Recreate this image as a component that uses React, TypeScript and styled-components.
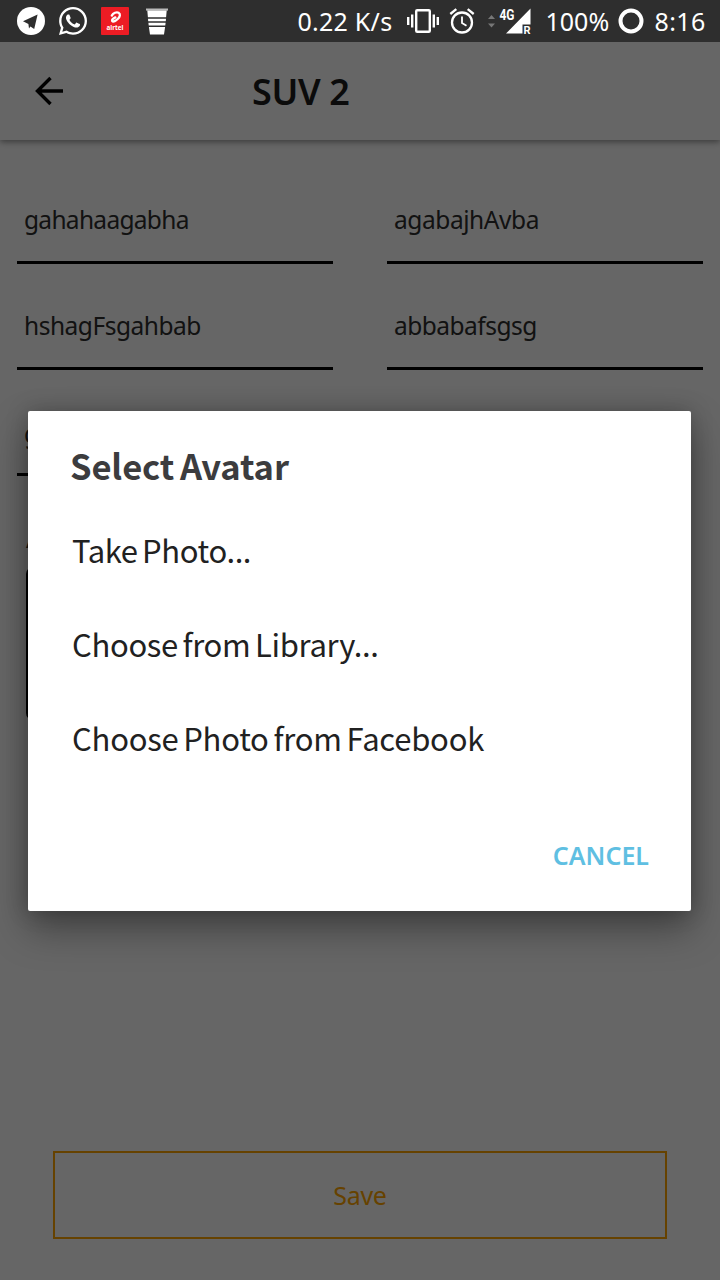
import React from "react";
import styled, { createGlobalStyle } from "styled-components";
import { FaWhatsapp } from "react-icons/fa";

const GlobalStyle = createGlobalStyle`
  * { box-sizing: border-box; }
  body {
    margin: 0;
    background: #fff;
    font-family: "Noto Sans", "Open Sans", sans-serif;
  }
`;

const Screen = styled.div`
  position: relative;
  display: flex;
  flex-direction: column;
  width: 720px;
  height: 1280px;
  overflow: hidden;
  background: #fff;
`;

const Text = styled.span<{ $width?: number; $spacing?: number }>`
  display: block;
  white-space: nowrap;
  width: ${(p) => (p.$width ? `${p.$width}px` : "auto")};
  letter-spacing: ${(p) => p.$spacing ?? 0}px;
`;

const StatusBar = styled.header`
  position: relative;
  z-index: 3;
  display: flex;
  flex: none;
  justify-content: space-between;
  height: 42px;
  padding: 0 13.5px 0 17px;
  background: #2e2e2e;
  color: #fff;
  font-size: 25px;
  line-height: 42px;
  svg { display: block; flex: none; }
`;

const StatusGroup = styled.div<{ $gap?: number }>`
  display: flex;
  align-items: center;
  gap: ${(p) => p.$gap ?? 0}px;
`;

const Slot = styled.div<{ $left: number }>`
  margin-left: ${(p) => p.$left}px;
`;

const AppBar = styled.div`
  display: flex;
  flex: none;
  align-items: center;
  height: 98px;
  padding-left: 34px;
  background: #fff;
  box-shadow: 0 2px 6px rgba(0, 0, 0, 0.42);
  svg { display: block; }
`;

const PageTitle = styled.h1`
  margin: 2px 0 0 188px;
  color: #1c1c1c;
  font-size: 36px;
  font-weight: 600;
  line-height: 96px;
  letter-spacing: -0.4px;
`;

const Form = styled.main`
  display: flex;
  flex: 1;
  flex-direction: column;
  padding: 18px 17px 41px;
`;

const Fields = styled.div`
  display: grid;
  grid-template-columns: 316px 316px;
  column-gap: 54px;
`;

const Field = styled.div`
  height: 106px;
  padding: 41px 7px 0;
  border-bottom: 3px solid #000;
  color: #2e2e2e;
  font-size: 24.5px;
  line-height: 41px;
  &:last-child { padding-top: 43px; }
`;

const AvatarLabel = styled.div`
  padding: 42px 0 0 9px;
  color: #333;
  font-size: 25px;
  line-height: 40px;
`;

const AvatarBox = styled.div`
  width: 156px;
  height: 153px;
  margin: 9px 0 0 9px;
  border: 3px solid #000;
  border-radius: 7px;
`;

const SaveButton = styled.button`
  height: 88px;
  margin: auto 36px 0;
  border: 2px solid #ffa500;
  background: transparent;
  color: #ffa500;
  font: 25px/84px "Noto Sans", sans-serif;
  letter-spacing: -0.3px;
  padding: 0;
`;

const Scrim = styled.div`
  position: absolute;
  inset: 42px 0 0;
  z-index: 2;
  display: flex;
  align-items: center;
  justify-content: flex-start;
  padding-left: 28px;
  background: rgba(0, 0, 0, 0.6);
`;

const Dialog = styled.section`
  display: flex;
  flex-direction: column;
  width: 663px;
  height: 500px;
  padding: 30px 42px 0;
  border-radius: 2px;
  background: #fff;
  font-family: "Noto Sans CJK SC", "Noto Sans", sans-serif;
  box-shadow: 0 18px 38px rgba(0, 0, 0, 0.36), 0 0 22px rgba(0, 0, 0, 0.22);
`;

const DialogTitle = styled.h2`
  margin: 0 0 14px;
  color: #3c3c3e;
  font-size: 34.5px;
  font-weight: 700;
  line-height: 48px;
  letter-spacing: -0.1px;
  word-spacing: -2px;
`;

const Option = styled.div`
  height: 94px;
  padding-left: 2px;
  color: #212121;
  font-size: 31px;
  line-height: 94px;
  word-spacing: -2px;
`;

const CancelButton = styled.button`
  align-self: flex-end;
  margin: 50px 0 0;
  padding: 0;
  border: 0;
  background: none;
  color: #5fbfe2;
  font: 600 25px/40px "Noto Sans", sans-serif;
`;

const TelegramIcon = () => (
  <svg width="28" height="28" viewBox="0 0 28 28">
    <circle cx="14" cy="14" r="14" fill="#fff" />
    <path d="M6 14.3 20.6 7.6 17.2 22 13.4 19.4 12 21.6 11.4 17Z" fill="#2e2e2e" />
  </svg>
);

const AirtelIcon = () => (
  <svg width="28" height="28" viewBox="0 0 28 28">
    <rect width="28" height="28" rx="1" fill="#ed1c24" />
    <path
      d="M10.8 8.600C12.200 5.900 15.600 4.700 17.600 5.700 19.900 7 18.900 9.900 17 11.800 15 13.800 12.200 15.300 11.200 14.100 10.600 12.800 12.600 11.300 14.400 10.400"
      fill="none"
      stroke="#fff"
      strokeWidth="2.300"
      strokeLinecap="round"
      strokeLinejoin="round"
    />
    <text x="14" y="22.800" textAnchor="middle" fill="#fff" fontFamily="Noto Sans" fontSize="7.500" fontWeight="700" textLength="17" lengthAdjust="spacingAndGlyphs">
      airtel
    </text>
  </svg>
);

const CupIcon = () => (
  <svg width="22" height="27" viewBox="0 0 22 27" fill="#fff">
    <path d="M0 0.500H22V2.600H0Z" fill="#bbb" />
    <path d="M1.300 2.600H20.700L20.100 9.300H1.900ZM2 10.700H20L19.800 13.300H2.200ZM2.400 14.700H19.600L19.300 17.500H2.700ZM2.900 18.900H19.100L18 26.500H4Z" />
  </svg>
);

const VibrationIcon = () => (
  <svg width="32" height="26" viewBox="0 0 32 26" fill="#fff">
    <rect x="9.200" y="2.200" width="13.600" height="21.600" rx="1" fill="none" stroke="#fff" strokeWidth="2.400" />
    <path d="M0 9H2.400V17H0ZM4 6.500H6.400V19.500H4ZM25.600 6.500H28V19.500H25.600ZM29.600 9H32V17H29.600Z" />
  </svg>
);

const AlarmIcon = () => (
  <svg width="26" height="26" viewBox="0 0 26 26" fill="none" stroke="#fff">
    <circle cx="13" cy="14.500" r="10" strokeWidth="2.300" />
    <path d="M13 8.500V15L17.500 17.800" strokeWidth="1.800" />
    <path d="M1.300 6 7.300 1.200M18.700 1.200 24.700 6" strokeWidth="2.300" />
  </svg>
);

const SignalIcon = () => (
  <svg width="44" height="28" viewBox="0 0 44 28">
    <path d="M3.500 8 7 12H0ZM3.500 20.500 0 16.500H7Z" fill="#777" />
    <path d="M42.500 1.500V17.500H34.500V26.500H18Z" fill="#fff" />
    <text x="11.500" y="12.800" fill="#fff" fontFamily="Roboto" fontSize="14" fontWeight="700" textLength="15" lengthAdjust="spacingAndGlyphs">
      4G
    </text>
    <text x="35.500" y="26.500" fill="#fff" fontFamily="Roboto" fontSize="11" fontWeight="700">
      R
    </text>
  </svg>
);

const BatteryIcon = () => (
  <svg width="26" height="26" viewBox="0 0 26 26">
    <circle cx="13" cy="13" r="10.500" fill="none" stroke="#fff" strokeWidth="4" />
  </svg>
);

const BackIcon = () => (
  <svg width="30" height="30" viewBox="0 0 30 30" fill="none" stroke="#000" strokeWidth="3.400">
    <path d="M29 15H3.500M16.500 2 3.500 15 16.500 28" />
  </svg>
);

const fields = [
  { value: "gahahaagabha", spacing: -0.7 },
  { value: "agabajhAvba", spacing: -0.43 },
  { value: "hshagFsgahbab", spacing: -0.48 },
  { value: "abbabafsgsg", spacing: -0.52 },
  { value: "g", spacing: 0 },
];

const options = [
  { label: "Take Photo...", spacing: -0.4 },
  { label: "Choose from Library...", spacing: -0.33 },
  { label: "Choose Photo from Facebook", spacing: -0.23 },
];

export default function App() {
  return (
    <>
      <GlobalStyle />
      <Screen>
        <StatusBar>
          <StatusGroup $gap={12}>
            <TelegramIcon />
            <FaWhatsapp size={32} />
            <AirtelIcon />
            <Slot $left={5}>
              <CupIcon />
            </Slot>
          </StatusGroup>
          <StatusGroup>
            <Text $width={109} $spacing={0.25}>0.22 K/s</Text>
            <VibrationIcon />
            <Slot $left={10}>
              <AlarmIcon />
            </Slot>
            <Slot $left={13}>
              <SignalIcon />
            </Slot>
            <Slot $left={14}>
              <Text $width={72}>100%</Text>
            </Slot>
            <BatteryIcon />
            <Slot $left={11}>
              <Text $width={52} $spacing={0.4}>8:16</Text>
            </Slot>
          </StatusGroup>
        </StatusBar>
        <AppBar>
          <BackIcon />
          <PageTitle>SUV 2</PageTitle>
        </AppBar>
        <Form>
          <Fields>
            {fields.map((f) => (
              <Field key={f.value}>
                <Text $spacing={f.spacing}>{f.value}</Text>
              </Field>
            ))}
          </Fields>
          <AvatarLabel>A</AvatarLabel>
          <AvatarBox />
          <SaveButton>Save</SaveButton>
        </Form>
        <Scrim>
          <Dialog>
            <DialogTitle>Select Avatar</DialogTitle>
            {options.map((o) => (
              <Option key={o.label}>
                <Text $spacing={o.spacing}>{o.label}</Text>
              </Option>
            ))}
            <CancelButton>CANCEL</CancelButton>
          </Dialog>
        </Scrim>
      </Screen>
    </>
  );
}
